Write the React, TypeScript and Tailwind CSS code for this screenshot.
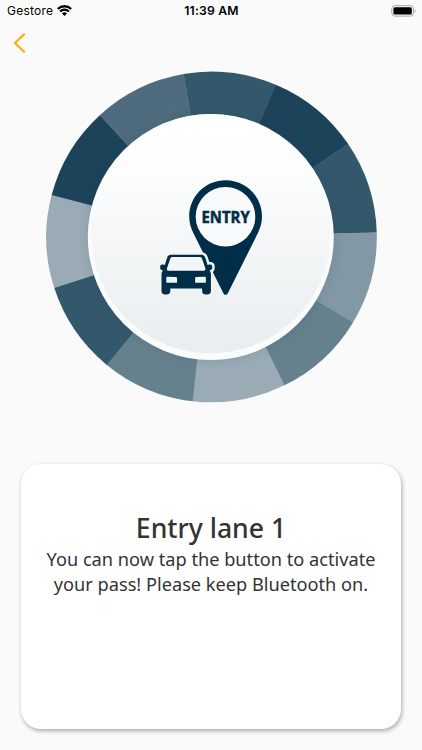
const segmentColors = [
  "#33586b",
  "#1c435a",
  "#33586b",
  "#8398a5",
  "#66818e",
  "#9aabb5",
  "#66818e",
  "#33586b",
  "#9aabb5",
  "#1c435a",
  "#4f6c7e",
];

const center = { x: 165.5, y: 165.5 };
const step = 360 / segmentColors.length;
const startAngle = -9.8;

const carOutline =
  "M171.2 255h29.9c2.3 0 3.6 1 4.3 3.2l2.2 7c.5-.4 1.1-.6 1.9-.6h.7c1.3 0 2 .8 2 2v1.4c0 1.6-.9 2.5-2.4 2.5h-.4c1 1.2 1.5 2.7 1.5 4.4v16.3c0 2.3-1.2 3.5-3.4 3.5h-2c-2.2 0-3.4-1.2-3.4-3.5v-2.4h-31.8v2.4c0 2.3-1.2 3.5-3.4 3.5h-2c-2.2 0-3.4-1.2-3.4-3.5v-16.3c0-1.7.5-3.2 1.5-4.4h-.4c-1.5 0-2.4-.9-2.4-2.5v-1.4c0-1.2.7-2 2-2h.7c.8 0 1.4.2 1.9.6l2.2-7c.7-2.2 2-3.2 4.3-3.2Z";
const carWindows =
  "M172.6 257.1c-1.2 0-1.9.5-2.3 1.7l-3.3 9.6c-.5 1.6 0 2.5 1.7 2.5h34.9c1.7 0 2.2-.9 1.7-2.5l-3.3-9.6c-.4-1.2-1.1-1.7-2.3-1.7Z";
const carLights =
  "M167.2 277c-.6 0-.9.3-.9.9v4.2c0 .6.3.9.9.9h9c.6 0 .9-.3.9-.9v-3.2c0-.9-.5-1.5-1.5-1.6Zm28.9.3c-.8.1-1 .7-1 1.6v3.2c0 .6.3.9.9.9h9c.6 0 .9-.3.9-.9v-4.2c0-.6-.3-.9-.9-.9Z";

function ringPoint(angle: number, radius: number) {
  const rad = (angle * Math.PI) / 180;
  return `${center.x + radius * Math.sin(rad)} ${center.y - radius * Math.cos(rad)}`;
}

function segmentPath(index: number) {
  const from = startAngle + index * step;
  const to = from + step + 0.15;
  return `M${ringPoint(from, 115)} L${ringPoint(from, 165.3)} A165.3 165.3 0 0 1 ${ringPoint(to, 165.3)} L${ringPoint(to, 115)} Z`;
}

function StatusBar() {
  return (
    <header className="grid h-[22px] grid-cols-3 items-center pl-[7px] pr-[6px] font-['Inter',sans-serif] text-black">
      <div className="flex items-center gap-[4px]">
        <span className="text-[12px] leading-[22px] tracking-[0.25px]">Gestore</span>
        <svg aria-hidden="true" className="mb-px" width="15" height="11" viewBox="0 0 15 11">
          <path d="M.8 4a9.5 9.5 0 0 1 13.4 0" fill="none" stroke="#000" strokeWidth="2.3" />
          <path d="M3.1 6.5a6.2 6.2 0 0 1 8.8 0" fill="none" stroke="#000" strokeWidth="2.1" />
          <path d="M7.5 10.9 5 8.5a3.5 3.5 0 0 1 5 0Z" />
        </svg>
      </div>
      <span className="text-center text-[12.2px] font-semibold leading-[22px] tracking-[0.2px]">11:39 AM</span>
      <svg aria-hidden="true" className="justify-self-end" width="25" height="12" viewBox="0 0 25 12">
        <rect x=".8" y=".7" width="21.6" height="10.4" rx="3" fill="none" stroke="#a3a3a3" />
        <rect x="2.4" y="2.3" width="18.4" height="7.2" rx="1.5" />
        <path d="M23.7 4.2c1.3.5 1.3 2.9 0 3.4Z" fill="#a3a3a3" />
      </svg>
    </header>
  );
}

function EntryButton() {
  return (
    <button type="button" aria-label="Activate entry pass" className="block h-[332px] w-[331px]">
      <svg width="331" height="332" viewBox="0 -0.5 331 332">
        <defs>
          <linearGradient id="face" x1="0" y1="0" x2="0" y2="1">
            <stop offset="0" stopColor="#ffffff" />
            <stop offset=".15" stopColor="#fefefe" />
            <stop offset="1" stopColor="#e8edef" />
          </linearGradient>
          <filter id="soft" x="-20%" y="-20%" width="140%" height="140%">
            <feGaussianBlur stdDeviation="6" />
          </filter>
          <clipPath id="ring">
            <circle cx="165.5" cy="165.5" r="165.3" />
          </clipPath>
        </defs>

        {segmentColors.map((color, index) => (
          <path key={index} d={segmentPath(index)} fill={color} />
        ))}
        <g clipPath="url(#ring)">
          <circle cx="165.2" cy="165.5" r="122" fill="#1c435a" opacity=".2" filter="url(#soft)" />
        </g>
        <circle cx="164.8" cy="165.5" r="123" fill="#fafcfc" />
        <circle cx="164.8" cy="162.3" r="119.6" fill="url(#face)" />

        {/* pin and car */}
        <g transform="translate(-46 -71.7)">
          <path
            d="M225.6 180.4c-20.2 0-36.4 16.2-36.4 36.4 0 6.5 1.7 12.2 5.1 18.5l29.2 58.4c.9 1.8 3.3 1.8 4.2 0l29.2-58.4c3.4-6.3 5.1-12 5.1-18.5 0-20.2-16.2-36.4-36.4-36.4Z"
            fill="#002d47"
          />
          <circle cx="225.5" cy="216.9" r="29.8" fill="#f8fafb" />
          <text
            x="225.6"
            y="223"
            textAnchor="middle"
            textLength="48.2"
            lengthAdjust="spacingAndGlyphs"
            fill="#002d47"
            stroke="#002d47"
            strokeWidth=".5"
            className="font-['Open_Sans',sans-serif] text-[15.6px] font-bold"
          >
            ENTRY
          </text>
          <path d={carOutline} fill="#f0f4f5" stroke="#f0f4f5" strokeWidth="5" strokeLinejoin="round" />
          <path d={carOutline} fill="#002d47" />
          <path d={carWindows} fill="#f3f6f7" />
          <path d={carLights} fill="#f0f4f5" />
        </g>
      </svg>
    </button>
  );
}

export default function App() {
  return (
    <main className="flex h-[750px] w-[422px] flex-col overflow-hidden bg-[#fafafa]">
      <StatusBar />
      <nav className="flex h-[49px] shrink-0 pl-[13px] pt-[11px]">
        <button type="button" aria-label="Back" className="h-5 w-[13px]">
          <svg width="13" height="20" viewBox="0 0 13 20">
            <path
              d="M11 1.4 1.9 10l9.1 8.6"
              fill="none"
              stroke="#f9b021"
              strokeWidth="2.3"
              strokeLinecap="round"
              strokeLinejoin="round"
            />
          </svg>
        </button>
      </nav>
      <div className="flex shrink-0 justify-center pl-[1px]">
        <EntryButton />
      </div>
      <section className="ml-[21px] mt-[60.5px] h-[265.5px] w-[380px] shrink-0 rounded-[20px] bg-white pt-[46px] text-center font-['Noto_Sans',sans-serif] text-[#333333] shadow-[1px_2px_4px_rgba(0,0,0,0.32)]">
        <h1 className="text-[26.6px] font-medium leading-[36px]">Entry lane 1</h1>
        <p className="mt-[1.2px] text-[18.2px] leading-[25px]">
          You can now tap the button to activate
          <br />
          your pass! Please keep Bluetooth on.
        </p>
      </section>
    </main>
  );
}
